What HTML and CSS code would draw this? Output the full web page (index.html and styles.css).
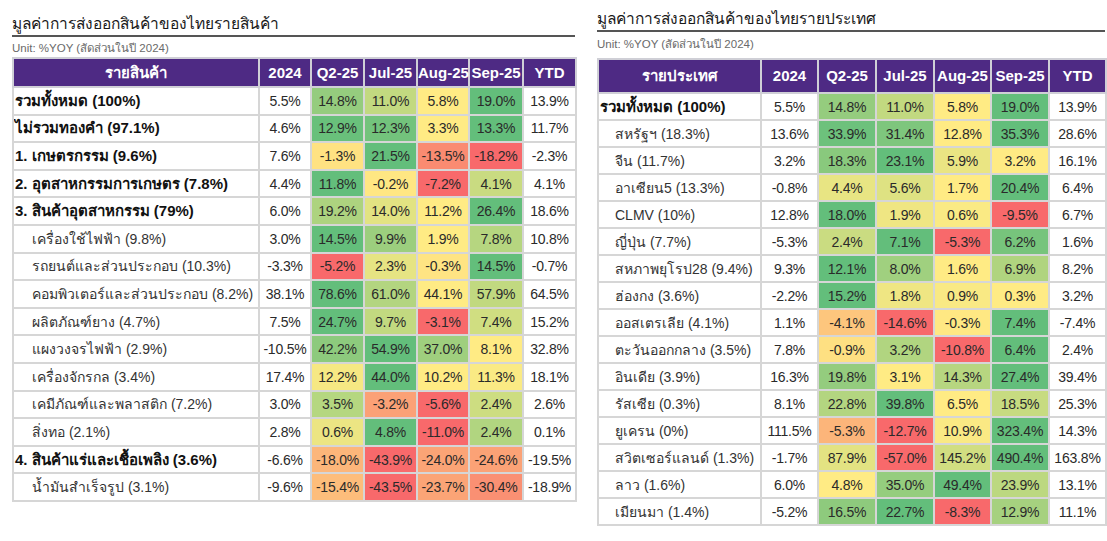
FILE: index.html
```html
<!DOCTYPE html>
<html lang="th">
<head>
<meta charset="utf-8">
<title>มูลค่าการส่งออก</title>
<link rel="stylesheet" href="styles.css">
</head>
<body>
<div class="page">
  <section class="panel panel-left">
    <h2 class="title">มูลค่าการส่งออกสินค้าของไทยรายสินค้า</h2>
    <div class="unit">Unit: %YOY (สัดส่วนในปี 2024)</div>
    <table class="grid grid-left">
      <colgroup>
        <col class="c-label"><col class="c-a"><col class="c-b"><col class="c-b"><col class="c-a"><col class="c-c"><col class="c-b">
      </colgroup>
      <thead>
        <tr><th>รายสินค้า</th><th>2024</th><th>Q2-25</th><th>Jul-25</th><th>Aug-25</th><th>Sep-25</th><th>YTD</th></tr>
      </thead>
      <tbody>
        <tr class="b"><td class="lbl">รวมทั้งหมด (100%)</td><td>5.5%</td><td class="hm">14.8%</td><td class="hm">11.0%</td><td class="hm">5.8%</td><td class="hm">19.0%</td><td>13.9%</td></tr>
        <tr class="b"><td class="lbl">ไม่รวมทองคำ (97.1%)</td><td>4.6%</td><td class="hm">12.9%</td><td class="hm">12.3%</td><td class="hm">3.3%</td><td class="hm">13.3%</td><td>11.7%</td></tr>
        <tr class="b"><td class="lbl">1. เกษตรกรรม (9.6%)</td><td>7.6%</td><td class="hm">-1.3%</td><td class="hm">21.5%</td><td class="hm">-13.5%</td><td class="hm">-18.2%</td><td>-2.3%</td></tr>
        <tr class="b"><td class="lbl">2. อุตสาหกรรมการเกษตร (7.8%)</td><td>4.4%</td><td class="hm">11.8%</td><td class="hm">-0.2%</td><td class="hm">-7.2%</td><td class="hm">4.1%</td><td>4.1%</td></tr>
        <tr class="b"><td class="lbl">3. สินค้าอุตสาหกรรม (79%)</td><td>6.0%</td><td class="hm">19.2%</td><td class="hm">14.0%</td><td class="hm">11.2%</td><td class="hm">26.4%</td><td>18.6%</td></tr>
        <tr><td class="lbl sub">เครื่องใช้ไฟฟ้า (9.8%)</td><td>3.0%</td><td class="hm">14.5%</td><td class="hm">9.9%</td><td class="hm">1.9%</td><td class="hm">7.8%</td><td>10.8%</td></tr>
        <tr><td class="lbl sub">รถยนต์และส่วนประกอบ (10.3%)</td><td>-3.3%</td><td class="hm">-5.2%</td><td class="hm">2.3%</td><td class="hm">-0.3%</td><td class="hm">14.5%</td><td>-0.7%</td></tr>
        <tr><td class="lbl sub">คอมพิวเตอร์และส่วนประกอบ (8.2%)</td><td>38.1%</td><td class="hm">78.6%</td><td class="hm">61.0%</td><td class="hm">44.1%</td><td class="hm">57.9%</td><td>64.5%</td></tr>
        <tr><td class="lbl sub">ผลิตภัณฑ์ยาง (4.7%)</td><td>7.5%</td><td class="hm">24.7%</td><td class="hm">9.7%</td><td class="hm">-3.1%</td><td class="hm">7.4%</td><td>15.2%</td></tr>
        <tr><td class="lbl sub">แผงวงจรไฟฟ้า (2.9%)</td><td>-10.5%</td><td class="hm">42.2%</td><td class="hm">54.9%</td><td class="hm">37.0%</td><td class="hm">8.1%</td><td>32.8%</td></tr>
        <tr><td class="lbl sub">เครื่องจักรกล (3.4%)</td><td>17.4%</td><td class="hm">12.2%</td><td class="hm">44.0%</td><td class="hm">10.2%</td><td class="hm">11.3%</td><td>18.1%</td></tr>
        <tr><td class="lbl sub">เคมีภัณฑ์และพลาสติก (7.2%)</td><td>3.0%</td><td class="hm" data-bg="#b5d780">3.5%</td><td class="hm">-3.2%</td><td class="hm">-5.6%</td><td class="hm" data-bg="#cddd81">2.4%</td><td>2.6%</td></tr>
        <tr><td class="lbl sub">สิ่งทอ (2.1%)</td><td>2.8%</td><td class="hm">0.6%</td><td class="hm">4.8%</td><td class="hm">-11.0%</td><td class="hm">2.4%</td><td>0.1%</td></tr>
        <tr class="b"><td class="lbl">4. สินค้าแร่และเชื้อเพลิง (3.6%)</td><td>-6.6%</td><td class="hm">-18.0%</td><td class="hm">-43.9%</td><td class="hm">-24.0%</td><td class="hm">-24.6%</td><td>-19.5%</td></tr>
        <tr><td class="lbl sub">น้ำมันสำเร็จรูป (3.1%)</td><td>-9.6%</td><td class="hm">-15.4%</td><td class="hm">-43.5%</td><td class="hm">-23.7%</td><td class="hm">-30.4%</td><td>-18.9%</td></tr>
      </tbody>
    </table>
  </section>

  <section class="panel panel-right">
    <h2 class="title">มูลค่าการส่งออกสินค้าของไทยรายประเทศ</h2>
    <div class="unit">Unit: %YOY (สัดส่วนในปี 2024)</div>
    <table class="grid grid-right">
      <colgroup>
        <col class="r-label"><col class="r-a"><col class="r-b"><col class="r-b"><col class="r-a"><col class="r-b"><col class="r-a">
      </colgroup>
      <thead>
        <tr><th>รายประเทศ</th><th>2024</th><th>Q2-25</th><th>Jul-25</th><th>Aug-25</th><th>Sep-25</th><th>YTD</th></tr>
      </thead>
      <tbody>
        <tr class="b"><td class="lbl">รวมทั้งหมด (100%)</td><td>5.5%</td><td class="hm">14.8%</td><td class="hm">11.0%</td><td class="hm">5.8%</td><td class="hm">19.0%</td><td>13.9%</td></tr>
        <tr><td class="lbl sub">สหรัฐฯ (18.3%)</td><td>13.6%</td><td class="hm">33.9%</td><td class="hm">31.4%</td><td class="hm">12.8%</td><td class="hm">35.3%</td><td>28.6%</td></tr>
        <tr><td class="lbl sub">จีน (11.7%)</td><td>3.2%</td><td class="hm">18.3%</td><td class="hm">23.1%</td><td class="hm">5.9%</td><td class="hm">3.2%</td><td>16.1%</td></tr>
        <tr><td class="lbl sub">อาเซียน5 (13.3%)</td><td>-0.8%</td><td class="hm">4.4%</td><td class="hm">5.6%</td><td class="hm">1.7%</td><td class="hm">20.4%</td><td>6.4%</td></tr>
        <tr><td class="lbl sub">CLMV (10%)</td><td>12.8%</td><td class="hm">18.0%</td><td class="hm">1.9%</td><td class="hm">0.6%</td><td class="hm">-9.5%</td><td>6.7%</td></tr>
        <tr><td class="lbl sub">ญี่ปุ่น (7.7%)</td><td>-5.3%</td><td class="hm">2.4%</td><td class="hm">7.1%</td><td class="hm">-5.3%</td><td class="hm">6.2%</td><td>1.6%</td></tr>
        <tr><td class="lbl sub">สหภาพยุโรป28 (9.4%)</td><td>9.3%</td><td class="hm">12.1%</td><td class="hm">8.0%</td><td class="hm">1.6%</td><td class="hm">6.9%</td><td>8.2%</td></tr>
        <tr><td class="lbl sub">ฮ่องกง (3.6%)</td><td>-2.2%</td><td class="hm">15.2%</td><td class="hm">1.8%</td><td class="hm">0.9%</td><td class="hm">0.3%</td><td>3.2%</td></tr>
        <tr><td class="lbl sub">ออสเตรเลีย (4.1%)</td><td>1.1%</td><td class="hm">-4.1%</td><td class="hm">-14.6%</td><td class="hm">-0.3%</td><td class="hm">7.4%</td><td>-7.4%</td></tr>
        <tr><td class="lbl sub">ตะวันออกกลาง (3.5%)</td><td>7.8%</td><td class="hm">-0.9%</td><td class="hm">3.2%</td><td class="hm">-10.8%</td><td class="hm">6.4%</td><td>2.4%</td></tr>
        <tr><td class="lbl sub">อินเดีย (3.9%)</td><td>16.3%</td><td class="hm">19.8%</td><td class="hm">3.1%</td><td class="hm">14.3%</td><td class="hm">27.4%</td><td>39.4%</td></tr>
        <tr><td class="lbl sub">รัสเซีย (0.3%)</td><td>8.1%</td><td class="hm">22.8%</td><td class="hm">39.8%</td><td class="hm">6.5%</td><td class="hm">18.5%</td><td>25.3%</td></tr>
        <tr><td class="lbl sub">ยูเครน (0%)</td><td>111.5%</td><td class="hm">-5.3%</td><td class="hm">-12.7%</td><td class="hm">10.9%</td><td class="hm">323.4%</td><td>14.3%</td></tr>
        <tr><td class="lbl sub">สวิตเซอร์แลนด์ (1.3%)</td><td>-1.7%</td><td class="hm">87.9%</td><td class="hm">-57.0%</td><td class="hm">145.2%</td><td class="hm">490.4%</td><td>163.8%</td></tr>
        <tr><td class="lbl sub">ลาว (1.6%)</td><td>6.0%</td><td class="hm">4.8%</td><td class="hm">35.0%</td><td class="hm">49.4%</td><td class="hm">23.9%</td><td>13.1%</td></tr>
        <tr><td class="lbl sub">เมียนมา (1.4%)</td><td>-5.2%</td><td class="hm">16.5%</td><td class="hm">22.7%</td><td class="hm">-8.3%</td><td class="hm">12.9%</td><td>11.1%</td></tr>
      </tbody>
    </table>
  </section>
</div>
<script src="heat.js"></script>
</body>
</html>
```

FILE: styles.css
```css
html, body {
  margin: 0;
  padding: 0;
  background: #ffffff;
}
body {
  font-family: "Liberation Sans", "Noto Sans", sans-serif;
  color: #2a2a2a;
}
.page {
  display: flex;
  align-items: flex-start;
  gap: 22px;
  padding-left: 12px;
}
.panel {
  display: flex;
  flex-direction: column;
}
.panel-left {
  width: 563px;
  padding-top: 13px;
}
.panel-right {
  width: 508px;
  padding-top: 8px;
}
.title {
  margin: 0;
  font-size: 15.5px;
  font-weight: normal;
  line-height: 22px;
  height: 22px;
  color: #1a1a1a;
  border-bottom: 2px solid #555555;
}
.unit {
  font-size: 11.5px;
  line-height: 18px;
  color: #6a6a6a;
  margin-top: 2px;
}
.panel-right .unit {
  margin-top: 3px;
}
.grid {
  border-collapse: collapse;
  table-layout: fixed;
  width: 100%;
  margin-top: 0;
}
.panel-right .grid {
  margin-top: 5px;
}
.c-label { width: 246px; }
.c-a { width: 52px; }
.c-b { width: 53px; }
.c-c { width: 54px; }
.r-label { width: 163px; }
.r-a { width: 57px; }
.r-b { width: 58px; }
.grid th {
  background: #4e2a84;
  color: #ffffff;
  font-weight: bold;
  font-size: 15px;
  line-height: 18px;
  height: 27px;
  padding: 0;
  text-align: center;
  border: 2px solid #cfcfd6;
  white-space: nowrap;
}
.grid-right th {
  height: 32px;
}
.grid td {
  border: 2px solid #d6d6d6;
  padding: 0;
  height: 25px;
  line-height: 18px;
  font-size: 14px;
  text-align: center;
  white-space: nowrap;
  color: #2a2a2a;
  letter-spacing: -0.2px;
}
.grid-left td {
  height: 25.6px;
}
.grid td.lbl {
  text-align: left;
  padding-left: 1px;
  overflow: hidden;
  letter-spacing: 0;
}
.grid td.sub {
  padding-left: 18px;
  color: #333333;
}
.grid-right td.sub {
  padding-left: 16px;
}
.grid tr.b td.lbl {
  font-weight: bold;
  font-size: 15px;
  color: #111111;
}
```

FILE: heat.js
```js
(function () {
  var R = [248, 105, 107], Y = [255, 235, 132], G = [99, 190, 123];
  function mix(a, b, t) {
    return a.map(function (v, i) { return Math.round(v + (b[i] - v) * t); });
  }
  var rows = document.querySelectorAll('tbody tr');
  rows.forEach(function (tr) {
    var cells = Array.prototype.slice.call(tr.querySelectorAll('td.hm'));
    if (!cells.length) return;
    var vals = cells.map(function (c) { return parseFloat(c.textContent); });
    var lo = Math.min.apply(null, vals), hi = Math.max.apply(null, vals);
    cells.forEach(function (c, i) {
      if (c.dataset.bg) { c.style.backgroundColor = c.dataset.bg; return; }
      var v = vals[i], col;
      if (lo >= 0) {
        col = hi === lo ? Y : mix(Y, G, (v - lo) / (hi - lo));
      } else if (v < 0) {
        col = mix(R, Y, (v - lo) / (0 - lo));
      } else {
        col = mix(Y, G, hi > 0 ? v / hi : 0);
      }
      c.style.backgroundColor = 'rgb(' + col.join(',') + ')';
    });
  });
})();
```
